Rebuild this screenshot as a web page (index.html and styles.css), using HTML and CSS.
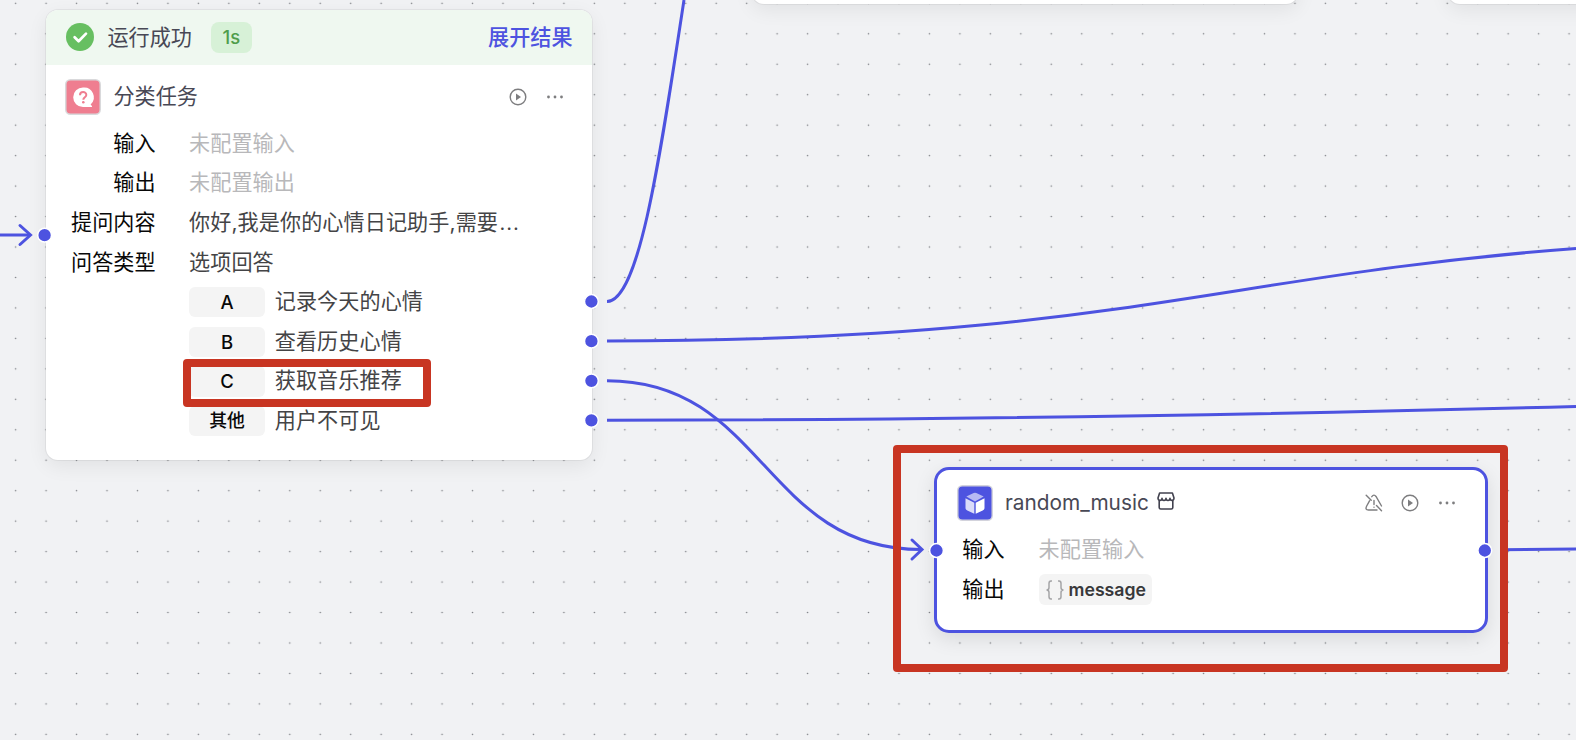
FILE: index.html
```html
<!DOCTYPE html>
<html lang="zh-CN">
<head>
<meta charset="utf-8">
<title>Workflow</title>
<link rel="stylesheet" href="styles.css">
</head>
<body>
<main class="canvas">
  <svg class="layer" width="1576" height="740">
    <defs>
      <pattern id="dots" x="0.4" y="-11.9" width="30.46" height="30.46" patternUnits="userSpaceOnUse"><circle cx="15.23" cy="15.23" r="0.8" fill="#7b7d82"/></pattern>
    </defs>
    <rect width="1576" height="740" fill="url(#dots)"/>
  </svg>

  <section class="node node-top-a"></section>
  <section class="node node-top-b"></section>

  <section class="node node-question">
    <header class="status">
      <svg class="status-icon" viewBox="0 0 28 28"><circle cx="14" cy="14" r="14" fill="#67bf61"/><path d="M8.6 14.2l4 4 7.4-7.6" fill="none" stroke="#fff" stroke-width="2.7" stroke-linecap="round" stroke-linejoin="round"/></svg>
      <span class="status-text">运行成功</span>
      <span class="duration">1s</span>
      <a class="expand">展开结果</a>
    </header>
    <div class="head">
      <svg class="node-icon" viewBox="0 0 36 36"><rect width="36" height="36" rx="5.5" fill="#d9d9db"/><rect x="1.5" y="1.5" width="33" height="33" rx="4" fill="#ef7e90"/><path d="M18 8.500a9.800 9.800 0 1 0 0 19.600h8.200c1 0 1.100-.8.5-1.400l-1.100-1.200A9.800 9.800 0 0 0 18 8.500z" fill="#fff"/><path d="M15 16.200c0-4.200 6.300-4 6.300-.3 0 2.300-3 2.300-3 4.800" fill="none" stroke="#ef7e90" stroke-width="2"/><circle cx="18.300" cy="23.200" r="1.300" fill="#ef7e90"/></svg>
      <span class="title">分类任务</span>
      <svg class="action play" viewBox="0 0 18 18"><circle cx="9" cy="9" r="7.800" fill="none" stroke="#7d7d7f" stroke-width="1.400"/><path d="M7 5.500v7l5-3.500z" fill="#7d7d7f"/></svg>
      <svg class="action more" viewBox="0 0 18 18"><g fill="#7d7d7f"><circle cx="2.500" cy="9" r="1.400"/><circle cx="9" cy="9" r="1.400"/><circle cx="15.500" cy="9" r="1.400"/></g></svg>
    </div>
    <div class="rows">
      <div class="row"><span class="label">输入</span><span class="empty">未配置输入</span></div>
      <div class="row"><span class="label">输出</span><span class="empty">未配置输出</span></div>
      <div class="row"><span class="label">提问内容</span><span class="value">你好,我是你的心情日记助手,需要<span class="ellipsis">…</span></span></div>
      <div class="row"><span class="label">问答类型</span><span class="value">选项回答</span></div>
      <div class="row"><span class="label"></span><span class="key">A</span><span class="value">记录今天的心情</span></div>
      <div class="row"><span class="label"></span><span class="key">B</span><span class="value">查看历史心情</span></div>
      <div class="row"><span class="label"></span><span class="key">C</span><span class="value">获取音乐推荐</span></div>
      <div class="row"><span class="label"></span><span class="key key-other">其他</span><span class="value">用户不可见</span></div>
    </div>
  </section>

  <section class="node node-music">
    <div class="head">
      <svg class="node-icon" viewBox="0 0 36 36"><rect width="36" height="36" rx="5.500" fill="#d3d3dc"/><rect x="1.500" y="1.500" width="33" height="33" rx="4" fill="#4d53e0"/><path d="M9.300 11.500l7.400-3.400q1.300-.5 2.600 0l7.400 3.400L18 16.400z" fill="#b8baf3"/><path d="M8.500 13.300l8.800 4.400v11l-7-3.200q-1.800-.8-1.800-2.600z" fill="#dbdcf9"/><path d="M27.500 13.300l-8.800 4.400v11l7-3.200q1.800-.8 1.800-2.600z" fill="#fff"/></svg>
      <span class="title">random_music</span>
      <svg class="store" viewBox="0 0 18 18" fill="none" stroke="#42424f" stroke-width="1.600" stroke-linejoin="round"><path d="M2.600 1h12.800l1.600 5c0 3.100-4 3.100-4 .3 0 2.900-4 2.900-4 0 0 2.900-4 2.900-4 0 0 2.800-4 2.800-4-.3z"/><path d="M2.200 8.500v7q0 1.500 1.500 1.500h10.600q1.500 0 1.500-1.500v-7"/></svg>
      <svg class="action warn" viewBox="0 0 18 18" fill="none" stroke="#7d7d7f" stroke-width="1.400" stroke-linecap="round"><path d="M1.200 1.200l5 5M11.500 11.500l5 5.200M6.800 2.700Q9 -.3 11 2.500l5.500 9.500M4.500 6.800L1.700 12q-2 4 1.800 4H12M9 6.500v4"/><path d="M9 13.200v.1"/></svg>
      <svg class="action play" viewBox="0 0 18 18"><circle cx="9" cy="9" r="7.800" fill="none" stroke="#7d7d7f" stroke-width="1.400"/><path d="M7 5.500v7l5-3.500z" fill="#7d7d7f"/></svg>
      <svg class="action more" viewBox="0 0 18 18"><g fill="#7d7d7f"><circle cx="2.500" cy="9" r="1.400"/><circle cx="9" cy="9" r="1.400"/><circle cx="15.500" cy="9" r="1.400"/></g></svg>
    </div>
    <div class="rows">
      <div class="row"><span class="label">输入</span><span class="empty">未配置输入</span></div>
      <div class="row"><span class="label">输出</span><span class="chip"><svg class="braces" viewBox="0 0 20 20" fill="none" stroke="#a5a5a7" stroke-width="1.500"><path d="M7 1H6Q4 1 4 3.500V7.500Q4 10 1.500 10 4 10 4 12.500V16.500Q4 19 6 19H7M13 1H14Q16 1 16 3.500V7.500Q16 10 18.500 10 16 10 16 12.500V16.500Q16 19 14 19H13"/></svg>message</span></div>
    </div>
  </section>

  <svg class="layer" width="1576" height="740">
    <g fill="none" stroke="#4d53e0" stroke-width="3">
      <path d="M0 235H29"/><path d="M20 225.500L30.500 235 20 244.500" stroke-linecap="round"/>
      <path d="M607 301.500C640 301 661 150 684 0"/>
      <path d="M607 341C1110 341 1220 275 1576 248.500"/>
      <path d="M607 380.700C764 380.700 764 549.500 921 549.500"/><path d="M912 540L922 549.500 912 559" stroke-linecap="round"/>
      <path d="M607 420.200C930 420.200 1250 415 1576 406.500"/>
      <path d="M1500 549.700L1576 549"/>
    </g>
    <g fill="#4d53e0" stroke="#fff" stroke-width="1.500">
      <circle cx="44.600" cy="235.200" r="6.900"/>
      <circle cx="591.400" cy="301.500" r="6.900"/><circle cx="591.400" cy="341.200" r="6.900"/><circle cx="591.400" cy="380.800" r="6.900"/><circle cx="591.400" cy="420.300" r="6.900"/>
      <circle cx="936.500" cy="550.500" r="6.900"/><circle cx="1484.800" cy="550.500" r="6.900"/>
    </g>
  </svg>
  <div class="mark mark-option"></div>
  <div class="mark mark-node"></div>
</main>
</body>
</html>
```
FILE: styles.css
```css
* { box-sizing: border-box; }
body { margin: 0; }
.canvas {
  position: relative;
  width: 1576px;
  height: 740px;
  overflow: hidden;
  background: #f1f2f4;
  font-family: Inter, "Noto Sans CJK SC", sans-serif;
  font-size: 21.1px;
  line-height: 30px;
  color: #444446;
}
.layer { position: absolute; left: 0; top: 0; }
.node {
  position: absolute;
  background: #fff;
  border-radius: 12px;
  box-shadow: 0 0 0 1px rgba(0, 0, 0, .05), 0 6px 20px rgba(0, 0, 0, .07);
}
.node-top-a { left: 752px; top: -40px; width: 546px; height: 44px; }
.node-top-b { left: 1448px; top: -40px; width: 546px; height: 44px; }
.node-question { left: 46px; top: 10px; width: 545.5px; height: 450px; }
.status {
  display: flex;
  align-items: center;
  height: 54.5px;
  padding: 0 19px 0 19.5px;
  border-radius: 12px 12px 0 0;
  background: #eff8f0;
}
.status-icon { width: 28px; height: 28px; }
.status-text { margin: 2px 0 0 14px; color: #484855; }
.duration {
  width: 41px;
  height: 30.5px;
  margin-left: 19px;
  border-radius: 8px;
  background: #d7f1d7;
  color: #4f9d4c;
  font-size: 18.5px;
  font-weight: 500;
  text-align: center;
}
.expand { margin: 2px 0 0 auto; color: #4d53e0; font-weight: 500; }
.head { display: flex; align-items: center; height: 36px; }
.node-question .head { margin: 14px 28px 0 18.5px; }
.node-icon { width: 36px; height: 36px; }
.title { margin-left: 13px; color: #484855; }
.action { width: 18px; height: 18px; margin-left: 18.7px; }
.node-question .play, .warn { margin-left: auto; }
.row { display: flex; align-items: center; height: 39.6px; white-space: nowrap; }
.label { flex: none; text-align: right; color: #080808; }
.empty { color: #b8b8ba; }
.value, .empty { letter-spacing: .1px; }
.ellipsis { margin-left: 1px; font-size: 24px; font-weight: 300; line-height: 1; }
.node-question .rows { margin-top: 9.5px; }
.node-question .label { width: 109.5px; margin-right: 33.5px; }
.key {
  width: 76px;
  height: 30.5px;
  margin-right: 9.7px;
  border-radius: 6px;
  background: #f4f4f4;
  color: #080808;
  font-size: 18.5px;
  font-weight: 500;
  text-align: center;
}
.key-other { font-size: 17.8px; }
.node-music {
  left: 933.5px;
  top: 467px;
  width: 554.5px;
  height: 165.5px;
  padding: 14.5px 29px 0 20px;
  border: 3px solid #4d53e0;
  border-radius: 15px;
  box-shadow: 0 6px 20px rgba(0, 0, 0, .1);
}
.node-music .title { margin-left: 12.5px; font-size: 20.8px; }
.store { width: 18px; height: 18px; margin: -3px 0 0 8px; }
.node-music .rows { margin-top: 9.8px; }
.node-music .label { width: 48px; margin-right: 34px; }
.chip {
  display: flex;
  align-items: center;
  height: 30.5px;
  padding: 0 6px;
  border-radius: 6px;
  background: #f4f4f4;
  color: #38383a;
  font-size: 17.7px;
  font-weight: 600;
}
.braces { width: 20px; height: 20px; margin-right: 4px; }
.mark { position: absolute; border: 8px solid #c83522; border-radius: 4px; }
.mark-option { left: 183px; top: 359px; width: 247.5px; height: 48px; }
.mark-node { left: 893px; top: 445px; width: 615px; height: 226.5px; }
```
